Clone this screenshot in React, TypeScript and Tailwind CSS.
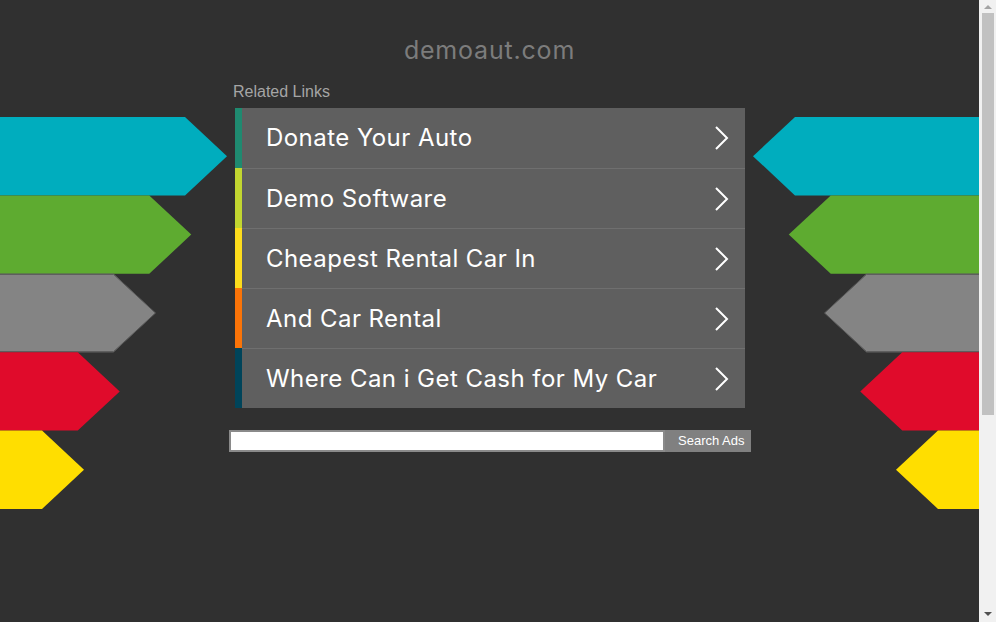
const links = [
  { label: "Donate Your Auto", bar: "bg-[#1f8a70]" },
  { label: "Demo Software", bar: "bg-[#c2d630]" },
  { label: "Cheapest Rental Car In", bar: "bg-[#fddc1c]" },
  { label: "And Car Rental", bar: "bg-[#fb7408]" },
  { label: "Where Can i Get Cash for My Car", bar: "bg-[#00445a]" },
];

const arrowColors = ["#00adbe", "#5eab30", "#848484", "#e00b2b", "#ffde00"];
const rowH = 78.4;

function LeftArrows() {
  return (
    <svg width="229" height="392" viewBox="0 0 229 392" className="block">
      {arrowColors.map((c, i) => {
        const y0 = i * rowH;
        const y1 = y0 + rowH;
        const s = 185 - i * 35.75;
        const t = s + 42;
        return (
          <g key={c}>
            <polygon points={`0,${y0} ${s},${y0} ${t},${(y0 + y1) / 2} ${s},${y1} 0,${y1}`} fill={c} />
            {c === "#848484" && (
              <polyline
                points={`0,${y0 + 0.5} ${s},${y0 + 0.5} ${t},${(y0 + y1) / 2} ${s},${y1 - 0.5} 0,${y1 - 0.5}`}
                fill="none"
                stroke="#555"
                strokeWidth="1"
              />
            )}
          </g>
        );
      })}
    </svg>
  );
}

function RightArrows() {
  return (
    <svg width="228" height="392" viewBox="0 0 228 392" className="block">
      {arrowColors.map((c, i) => {
        const y0 = i * rowH;
        const y1 = y0 + rowH;
        const t = 2 + i * 35.75;
        const s = t + 42;
        return (
          <g key={c}>
            <polygon points={`228,${y0} ${s},${y0} ${t},${(y0 + y1) / 2} ${s},${y1} 228,${y1}`} fill={c} />
            {c === "#848484" && (
              <polyline
                points={`228,${y0 + 0.5} ${s},${y0 + 0.5} ${t},${(y0 + y1) / 2} ${s},${y1 - 0.5} 228,${y1 - 0.5}`}
                fill="none"
                stroke="#555"
                strokeWidth="1"
              />
            )}
          </g>
        );
      })}
    </svg>
  );
}

function Chevron() {
  return (
    <svg width="16" height="24" viewBox="0 0 16 24" className="block">
      <polyline points="2,1 13,12 2,23" fill="none" stroke="white" strokeWidth="2" />
    </svg>
  );
}

function FakeScrollbar() {
  return (
    <div className="flex h-[622px] w-[17px] flex-col items-center bg-[#f1f1f1]">
      <div className="flex h-[13px] w-full items-center justify-center">
        <div className="h-0 w-0 border-x-[4px] border-b-[4px] border-x-transparent border-b-[#a3a3a3]" />
      </div>
      <div className="ml-[1px] h-[402px] w-[12px] bg-[#c1c1c1]" />
      <div className="flex-1" />
      <div className="flex h-[16px] w-full items-center justify-center">
        <div className="h-0 w-0 border-x-[4px] border-t-[4px] border-x-transparent border-t-[#505050]" />
      </div>
    </div>
  );
}

export default function App() {
  return (
    <div className="flex h-[622px] w-[996px] overflow-hidden">
      <main className="flex h-[622px] w-[979px] flex-col bg-[#303030]">
        <h1 className="h-[84px] pt-[34px] text-center text-[25px] leading-[32px] tracking-[0.8px] text-[#7c7c7c] [font-family:Inter,'Noto_Sans',sans-serif]">
          demoaut.com
        </h1>

        <div className="flex">
          <div className="w-[229px] pt-[33px]">
            <LeftArrows />
          </div>

          <div className="w-[522px]">
            <p className="pl-[4px] text-[16px] leading-[16px] text-[#a5a5a5] [font-family:'Liberation_Sans',Arial,sans-serif]">
              Related Links
            </p>
            <ul className="mx-[6px] mt-[8px] w-[510px]">
              {links.map((l, i) => (
                <li key={l.label} className="flex h-[60px]">
                  <span className={`w-[7px] ${l.bar}`} />
                  <a
                    href="#"
                    className={`flex flex-1 items-center justify-between bg-[#5f5f5f] pl-[24px] pr-[15px] text-[24px] tracking-[0.45px] text-white [font-family:Inter,'Noto_Sans',sans-serif] ${
                      i > 0 ? "border-t border-[#6f6f6f]" : ""
                    }`}
                  >
                    <span>{l.label}</span>
                    <Chevron />
                  </a>
                </li>
              ))}
            </ul>
            <form className="mt-[22px] flex h-[22px]" onSubmit={(e) => e.preventDefault()}>
              <input className="h-[22px] w-[436px] border-2 border-[#8a8a8a] bg-white outline-none" />
              <button
                type="submit"
                className="h-[22px] w-[86px] bg-[#808080] pl-[13px] text-left text-[13px] text-white [font-family:'Liberation_Sans',Arial,sans-serif]"
              >
                Search Ads
              </button>
            </form>
          </div>

          <div className="w-[228px] pt-[33px]">
            <RightArrows />
          </div>
        </div>
      </main>
      <FakeScrollbar />
    </div>
  );
}
